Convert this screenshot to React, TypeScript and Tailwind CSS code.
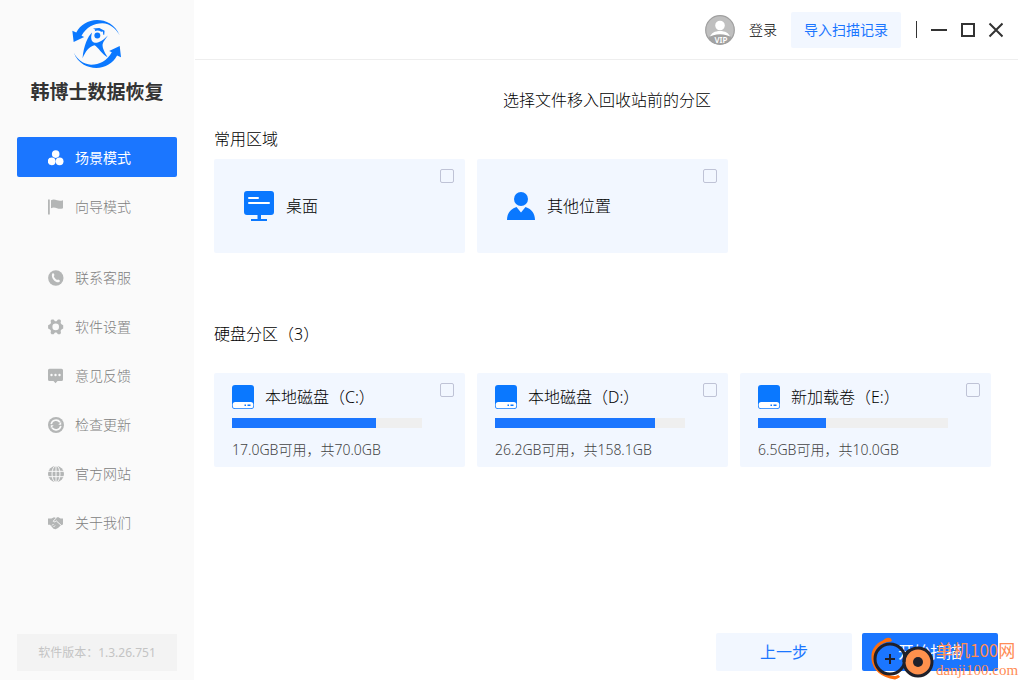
import type { ReactNode } from 'react';

type NavEntry = { label: string; icon: ReactNode; active?: boolean };

const modes: NavEntry[] = [
  { label: '场景模式', icon: <ScenesIcon />, active: true },
  { label: '向导模式', icon: <FlagIcon /> },
];

const links: NavEntry[] = [
  { label: '联系客服', icon: <PhoneIcon /> },
  { label: '软件设置', icon: <GearIcon /> },
  { label: '意见反馈', icon: <MessageIcon /> },
  { label: '检查更新', icon: <UpdateIcon /> },
  { label: '官方网站', icon: <GlobeIcon /> },
  { label: '关于我们', icon: <HandshakeIcon /> },
];

const disks = [
  { name: '本地磁盘（C:）', free: '17.0GB', total: '70.0GB', used: 76 },
  { name: '本地磁盘（D:）', free: '26.2GB', total: '158.1GB', used: 84 },
  { name: '新加载卷（E:）', free: '6.5GB', total: '10.0GB', used: 36 },
];

function ScenesIcon() {
  return (
    <svg viewBox="0 0 16 16" className="h-4 w-4" fill="currentColor">
      <circle cx="7.7" cy="4.1" r="3.8" />
      <circle cx="3.7" cy="11.3" r="3.9" />
      <circle cx="11.6" cy="11.3" r="3.9" />
    </svg>
  );
}

function FlagIcon() {
  return (
    <svg viewBox="0 0 16 16" className="h-4 w-4" fill="currentColor">
      <path d="M0 .5h1.8v15H0zM3 1.2c2-1 4-.7 6 .1 2 .7 4 .6 6-.1v8c-2 .8-4 .8-6 .1-2-.8-4-1-6-.1z" />
    </svg>
  );
}

function PhoneIcon() {
  return (
    <svg viewBox="0 0 16 16" className="h-4 w-4">
      <circle cx="7.8" cy="8" r="7.7" fill="currentColor" />
      <path
        d="M4.3 3.6c.8-.8 1.4-.5 1.8.4.4 1 .4 1.5-.3 2.1.4 1.7 1.6 3.1 3.3 3.9.7-.8 1.2-.7 2.1-.1.9.6 1 1.2.2 1.9-1.2 1-3.3.7-5.3-1.2C4.1 8.6 3.2 5.3 4.3 3.6z"
        fill="#fafafa"
      />
    </svg>
  );
}

function GearIcon() {
  return (
    <svg viewBox="0 0 16 16" className="h-4 w-4" fill="currentColor" fillRule="evenodd">
      <path d="M3.6.5h2L7 2.2h1.5L10 .5h2l1 1.2-.4 2.3.9 1.3L15.2 6.3v3.2l-1.7 1-.9 1.3.4 2.3-1 1.2h-2L8.5 13.6H7l-1.4 1.7h-2l-1-1.2.4-2.3-1-1.3L.1 9.5V6.3l1.9-1L3 4 2.6 1.7zM7.7 4.6a3.3 3.3 0 1 0 0 6.6 3.3 3.3 0 0 0 0-6.6z" />
    </svg>
  );
}

function MessageIcon() {
  return (
    <svg viewBox="0 0 16 16" className="h-4 w-4">
      <path d="M1.5.8h12A1.5 1.5 0 0 1 15 2.3v9.2a1.5 1.5 0 0 1-1.5 1.5h-4l-2 2.2-2-2.2h-4A1.5 1.5 0 0 1 0 11.5V2.3A1.5 1.5 0 0 1 1.5.8z" fill="currentColor" />
      <g fill="#fafafa">
        <circle cx="3.5" cy="7" r="1.2" />
        <circle cx="7.5" cy="7" r="1.2" />
        <circle cx="11.5" cy="7" r="1.2" />
      </g>
    </svg>
  );
}

function UpdateIcon() {
  return (
    <svg viewBox="0 0 16 16" className="h-4 w-4">
      <circle cx="8" cy="8" r="8" fill="currentColor" />
      <g fill="none" stroke="#fafafa" strokeWidth="1.6">
        <path d="M3.2 7.2A4.9 4.9 0 0 1 12 5.2" />
        <path d="M12.8 8.8A4.9 4.9 0 0 1 4 10.8" />
      </g>
      <path d="M13.2 4.8v2.9h-2.9zM2.8 11.2V8.3h2.9z" fill="#fafafa" />
    </svg>
  );
}

function GlobeIcon() {
  return (
    <svg viewBox="0 0 16 16" className="h-4 w-4">
      <circle cx="8" cy="8" r="8" fill="currentColor" />
      <g fill="none" stroke="#fafafa" strokeWidth="1">
        <path d="M8 0v16M0 5.3h16M0 10.7h16" />
        <ellipse cx="8" cy="8" rx="4" ry="8.2" />
      </g>
    </svg>
  );
}

function HandshakeIcon() {
  return (
    <svg viewBox="0 0 16 16" className="h-4 w-4">
      <path d="M0 3.5h3.5L6 2.2l2 .8 2-1 2.5 1.5H15v6l-2 .8-3 2.7-2.5 1.3-2-.5L2 9.8H0z" fill="currentColor" />
      <path d="M8 3.2 5.2 6.2c.8 1 2 .8 3-.4l4.8 4.4M4 10.5 5.5 9M5.5 12 7 10.5" fill="none" stroke="#fafafa" strokeWidth="1" />
    </svg>
  );
}

// One swoosh of the logo, used twice: as is and turned half round.
const swoosh = 'M144 50C130 16 102 3 75 3 48 3 24 18 12 41L0 36 4 70 36 55 28 51C42 25 66 13 91 13 115 14 133 30 144 50Z';

function Logo() {
  return (
    <svg viewBox="0 0 150 152" className="h-[50px] w-[50px]" fill="#0a78ff">
      <path d={swoosh} />
      <path d={swoosh} transform="rotate(180 74 76)" />
      <circle cx="76" cy="50" r="9" />
      <path d="M63 29 82 27 98 36 97 48 94 48 93 38 88 39Q78 32 68 37L70 33Z" />
      <path d="M60 41C47 53 35 80 31 119 40 100 50 84 67 80 78 84 91 110 107 116 98 102 91 88 92 77 94 67 102 60 108 50 94 64 82 73 68 72 57 70 55 57 60 41Z" />
    </svg>
  );
}

function AvatarIcon() {
  return (
    <svg viewBox="0 0 30 30" className="h-[30px] w-[30px]">
      <defs>
        <clipPath id="avatar">
          <circle cx="15" cy="15" r="14.5" />
        </clipPath>
      </defs>
      <g clipPath="url(#avatar)">
        <rect width="30" height="30" fill="#bfbfbf" />
        <circle cx="15" cy="10.5" r="4.8" fill="#fff" />
        <path d="M5 22c1-4 5-6 10-6s9 2 10 6z" fill="#fff" />
        <path d="M3 23c6-5 18-5 24 0v8H3z" fill="#a3a3a3" />
      </g>
      <circle cx="15" cy="15" r="14.3" fill="none" stroke="#a0a0a0" strokeWidth="1.2" />
      <text x="16" y="28" textAnchor="middle" fontSize="8" fontWeight="600" fill="#fff">VIP</text>
    </svg>
  );
}

function DesktopIcon() {
  return (
    <svg viewBox="0 0 30 30" className="h-[30px] w-[30px]">
      <path d="M3 0h24a3 3 0 0 1 3 3v18a3 3 0 0 1-3 3H17v4h6v2H7v-2h6.500v-4H3a3 3 0 0 1-3-3V3a3 3 0 0 1 3-3z" fill="#0a78ff" />
      <path d="M5 7h9M5 12h20" stroke="#fff" strokeWidth="2" strokeLinecap="round" />
    </svg>
  );
}

function PersonIcon() {
  return (
    <svg viewBox="0 0 28 28" className="h-7 w-7" fill="#0a78ff">
      <circle cx="14" cy="7" r="7" />
      <path d="M0 28c0-6 3-11 9.500-13L14 20.500 18.500 15C25 17 28 22 28 28z" />
    </svg>
  );
}

function DiskIcon() {
  return (
    <svg viewBox="0 0 22 24" className="h-6 w-[22px]">
      <rect width="22" height="24" rx="3" fill="#0a78ff" />
      <rect x="0.7" y="17" width="20.6" height="6.3" rx="2.5" fill="#fff" />
      <path d="M12.5 20.300h1.500M15.500 20.300h3" stroke="#0a78ff" strokeWidth="1.6" />
    </svg>
  );
}

function NavItem({ label, icon, active }: NavEntry) {
  return (
    <button
      className={
        active
          ? 'flex h-10 items-center gap-[11px] rounded-xs bg-[#1b76ff] pt-0.5 pl-[31px] text-sm font-normal text-white'
          : 'flex h-10 items-center gap-[11px] rounded-xs pt-0.5 pl-[31px] text-sm font-light text-[#808080]'
      }
    >
      <span className={active ? 'text-white' : 'text-[#b4b6b6]'}>{icon}</span>
      {label}
    </button>
  );
}

function CardCheckbox() {
  return (
    <input
      type="checkbox"
      className="absolute top-[10px] right-[11px] h-[14px] w-[14px] appearance-none rounded-xs border border-[#bfc3d6] checked:bg-[#1b76ff]"
    />
  );
}

function PlaceCard({ label, icon }: { label: string; icon: ReactNode }) {
  return (
    <label className="relative flex h-[94px] items-center gap-3 rounded-xs bg-[#f2f7ff] pl-[30px] text-base">
      {icon}
      {label}
      <CardCheckbox />
    </label>
  );
}

function DiskCard({ name, free, total, used }: (typeof disks)[number]) {
  return (
    <label className="relative block h-[94px] rounded-xs bg-[#f2f7ff] px-[18px] pt-3">
      <span className="flex h-6 items-center gap-[11px] text-base">
        <DiskIcon />
        {name}
      </span>
      <span className="mt-[9px] mr-[25px] block h-[10px] bg-[#efefef]">
        <span className="block h-full bg-[#1b76ff]" style={{ width: `${used}%` }} />
      </span>
      <span className="mt-3 block text-sm leading-5 text-[#444]">
        {free}可用，共{total}
      </span>
      <CardCheckbox />
    </label>
  );
}

function Sidebar() {
  return (
    <aside className="flex w-[194px] shrink-0 flex-col bg-[#fafafa] px-[17px] pt-[19px] pb-[9px]">
      <div className="flex flex-col items-center gap-2">
        <Logo />
        <h1 className="text-[19px] leading-[30px] font-bold whitespace-nowrap text-[#333]">韩博士数据恢复</h1>
      </div>
      <nav className="mt-[30px] flex flex-col gap-[31px]">
        <div className="flex flex-col gap-[9px]">
          {modes.map((item) => (
            <NavItem key={item.label} {...item} />
          ))}
        </div>
        <div className="flex flex-col gap-[9px]">
          {links.map((item) => (
            <NavItem key={item.label} {...item} />
          ))}
        </div>
      </nav>
      <p className="mt-auto flex h-[37px] items-center justify-center bg-[#f3f3f3] text-xs font-normal text-[#c4c4c4]">
        软件版本：1.3.26.751
      </p>
    </aside>
  );
}

function Topbar() {
  return (
    <header className="mr-0.5 ml-px flex h-[60px] items-center justify-end border-b border-[#eee] pr-[15px] text-sm">
      <button className="flex items-center gap-[14px]">
        <AvatarIcon />
        登录
      </button>
      <button className="ml-[14px] h-9 rounded-xs bg-[#f2f7ff] px-[13px] font-normal text-[#1b76ff]">导入扫描记录</button>
      <span className="ml-[15px] h-[17px] w-px bg-[#333]" />
      <div className="ml-[14px] flex items-center gap-3 text-[#333]">
        <button aria-label="最小化">
          <svg viewBox="0 0 16 16" className="h-4 w-4" stroke="currentColor" strokeWidth="2">
            <path d="M0 8h16" />
          </svg>
        </button>
        <button aria-label="最大化">
          <svg viewBox="0 0 16 16" className="h-4 w-4" fill="none" stroke="currentColor" strokeWidth="2">
            <path d="M3 2h12v12H3z" />
          </svg>
        </button>
        <button aria-label="关闭">
          <svg viewBox="0 0 16 16" className="h-4 w-4" stroke="currentColor" strokeWidth="2">
            <path d="M2.500 1.500l13 13M15.500 1.500l-13 13" />
          </svg>
        </button>
      </div>
    </header>
  );
}

function Watermark() {
  return (
    <div className="pointer-events-none absolute right-0 bottom-0 flex items-end text-[#ff8c55]">
      <svg viewBox="0 0 66 44" className="h-11 w-[66px]">
        <path d="M21 4C8 5 2 14 3 23c1 10 9 17 22 19l4-2" fill="none" stroke="#ff6d0a" strokeWidth="3" />
        <path d="M12 6C15 1 21 0 22 5zM19 40c4 4 10 3 11 0z" fill="#ff6d0a" />
        <circle cx="20" cy="23" r="15" fill="none" stroke="#20202a" strokeWidth="3" />
        <path d="M20 18v10M15 23h10" stroke="#20202a" strokeWidth="2" />
        <circle cx="48" cy="26" r="14" fill="#ff914d" stroke="#20202a" strokeWidth="3" />
        <path d="M34 26c0-6 2-10 6-12" fill="none" stroke="#20202a" strokeWidth="3" />
        <circle cx="48" cy="26" r="5" fill="#20202a" />
      </svg>
      <div className="flex w-[84px] flex-col whitespace-nowrap">
        <span className="font-['Noto_Sans_CJK_SC',sans-serif] text-[17px] leading-5 font-normal">单机100网</span>
        <span className="font-['Liberation_Serif',serif] text-[15px] leading-5">danji100.com</span>
      </div>
    </div>
  );
}

export default function App() {
  return (
    <div className="relative flex min-h-screen bg-white font-['Noto_Sans','Noto_Sans_CJK_SC',sans-serif] font-light text-black">
      <Sidebar />
      <div className="flex min-w-0 flex-1 flex-col">
        <Topbar />
        <main className="flex flex-1 flex-col px-5">
          <h2 className="mt-7 text-center text-base">选择文件移入回收站前的分区</h2>
          <section className="mt-[15px] pr-[9px]">
            <h3 className="text-base">常用区域</h3>
            <div className="mt-2 grid grid-cols-3 gap-3">
              <PlaceCard label="桌面" icon={<DesktopIcon />} />
              <PlaceCard label="其他位置" icon={<PersonIcon />} />
            </div>
          </section>
          <section className="mt-[69px] pr-[9px]">
            <h3 className="text-base">硬盘分区（3）</h3>
            <div className="mt-[27px] grid grid-cols-3 gap-3">
              {disks.map((disk) => (
                <DiskCard key={disk.name} {...disk} />
              ))}
            </div>
          </section>
        </main>
        <footer className="flex justify-end gap-[10px] pr-[22px] pb-[9px] text-base font-normal">
          <button className="h-[38px] w-[136px] rounded-xs bg-[#f2f7ff] text-[#1b76ff]">上一步</button>
          <button className="h-[38px] w-[136px] rounded-xs bg-[#1b76ff] text-white">开始扫描</button>
        </footer>
      </div>
      <Watermark />
    </div>
  );
}
